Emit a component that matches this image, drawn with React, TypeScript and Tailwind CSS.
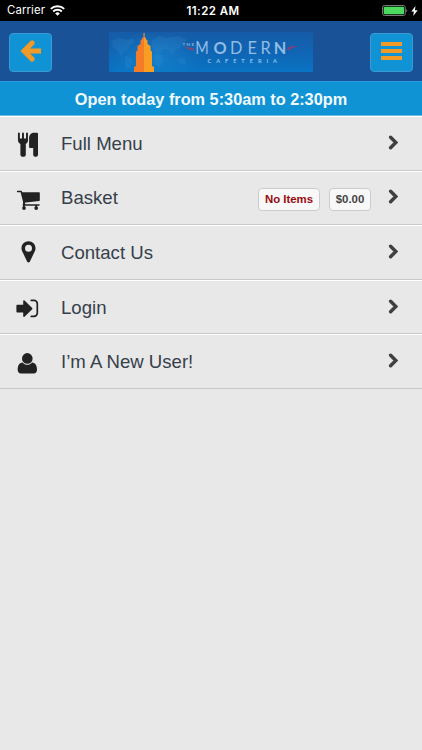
import type { ReactNode } from 'react';
import clsx from 'clsx';

type MenuItem = {
  label: string;
  icon: ReactNode;
  badges?: { text: string; className: string }[];
};

const items: MenuItem[] = [
  {
    label: 'Full Menu',
    icon: (
      <g>
        <path d="M4.900 3.500v6M9 3.500v6M13 3.500v6" stroke="currentColor" strokeWidth="1.900" strokeLinecap="round" />
        <path d="M4 8.500h10v1.800c0 1.800-.9 3-2.200 3.600v10.800a2 2 0 0 1-2 2H8.400a2 2 0 0 1-2-2V13.900C4.900 13.300 4 12.100 4 10.300z" />
        <path d="M20.500 2.700H23a1 1 0 0 1 1 1v21a2 2 0 0 1-2 2h-.800a2 2 0 0 1-2-2V18H16a.9.9 0 0 1-.9-.9V8.300c0-3.600 2-5.600 5.400-5.600z" />
      </g>
    ),
  },
  {
    label: 'Basket',
    icon: (
      <g>
        <path d="M3.600 6.500h3.600l3.400 13.200M9.300 20.100H25" fill="none" stroke="currentColor" strokeWidth="1.500" strokeLinecap="round" strokeLinejoin="round" />
        <path d="M7.400 7.200h17.700c.4 0 .7.300.7.700v7.300c0 .4-.3.700-.7.800L10 17.700z" />
        <circle cx="10" cy="23.100" r="1.900" />
        <circle cx="22.200" cy="23.100" r="1.900" />
        <path d="M9 17h1.800v6H9zM21.400 20h1.600v3h-1.600z" />
      </g>
    ),
    badges: [
      { text: 'No Items', className: 'w-[62px] text-[#990a10]' },
      { text: '$0.00', className: 'w-[42px] text-[#444]' },
    ],
  },
  {
    label: 'Contact Us',
    icon: (
      <path
        fillRule="evenodd"
        d="M14.500 2.300c-4 0-7 3.100-7 6.900 0 1.300.3 2.100.8 3.200l4.900 10.300c.5 1.100 2.100 1.100 2.600 0l4.900-10.300c.5-1.100.8-1.900.8-3.200 0-3.800-3-6.900-7-6.900zm0 3.500a3.500 3.500 0 1 1 0 7 3.500 3.500 0 0 1 0-7z"
      />
    ),
  },
  {
    label: 'Login',
    icon: (
      <g transform="translate(0 -.8)">
        <path d="M3.200 11.600h6V7.900c0-.7.800-1 1.300-.5l7.700 7.500c.3.300.3.800 0 1.100l-7.700 7.500c-.5.500-1.300.2-1.300-.5v-3.700h-6c-.5 0-.8-.3-.8-.8v-6.100c0-.5.3-.8.8-.8z" />
        <path d="M17.300 7.200H20a3.300 3.300 0 0 1 3.300 3.300v9.400a3.300 3.300 0 0 1-3.300 3.300h-2.700" fill="none" stroke="currentColor" strokeWidth="1.700" strokeLinecap="round" />
      </g>
    ),
  },
  {
    label: 'I’m A New User!',
    icon: (
      <g>
        <circle cx="13.300" cy="9.400" r="5.300" />
        <path d="M8.600 13.400c1.200 1.500 2.800 2.300 4.700 2.300s3.500-.8 4.700-2.300c3.500.2 5 3.200 5 7.300 0 2.300-1.300 3.700-3.300 3.700H7c-2 0-3.300-1.400-3.300-3.700 0-4.100 1.400-7.100 4.900-7.300z" />
      </g>
    ),
  },
];

function StatusBar() {
  return (
    <div className="grid h-[21px] grid-cols-[1fr_auto_1fr] items-center bg-black pr-[4px] pl-[7px] text-[11.6px] text-white">
      <div className="flex items-center gap-[5px]">
        <span className="pt-px font-['Inter','Liberation_Sans',sans-serif] text-[11.4px] tracking-[0.1px]">Carrier</span>
        <svg width="15" height="11" viewBox="0 0 15 11" fill="none" stroke="currentColor" strokeWidth="2">
          <path d="M.8 3.900a9.500 9.500 0 0 1 13.400 0M3.200 6.500a6.100 6.100 0 0 1 8.600 0" />
          <path d="M7.500 10.800 5.200 8.500a3.200 3.200 0 0 1 4.600 0z" fill="currentColor" stroke="none" />
        </svg>
      </div>
      <span className="pt-[2px] pl-px font-['Inter','Liberation_Sans',sans-serif] text-[11.5px] font-semibold tracking-[0.45px]">11:22 AM</span>
      <div className="flex items-center justify-end gap-[3px]">
        <svg width="26" height="11" viewBox="0 0 26 11">
          <rect x=".5" y=".5" width="22.800" height="10" rx="2" fill="none" stroke="#777" />
          <rect x="1.700" y="1.700" width="20.400" height="7.600" rx="1" fill="#4cd95f" />
          <path d="M24.300 3.700c1.200.5 1.200 3.100 0 3.600z" fill="#777" />
        </svg>
        <svg width="7" height="10" viewBox="0 0 7 10" fill="currentColor">
          <path d="M4.500 0 .3 5.600h2.600L2.200 10l4.500-5.800H3.900z" />
        </svg>
      </div>
    </div>
  );
}

function Logo() {
  return (
    <svg width="204" height="40" viewBox="0 0 204 40">
      <defs>
        <linearGradient id="sky" x1="0" y1="0" x2="0" y2="1">
          <stop offset="0" stopColor="#165ba7" />
          <stop offset=".5" stopColor="#1065b4" />
          <stop offset="1" stopColor="#0874c3" />
        </linearGradient>
        <radialGradient id="glow">
          <stop offset="0" stopColor="#1a8ad2" stopOpacity=".6" />
          <stop offset="1" stopColor="#1a8ad2" stopOpacity="0" />
        </radialGradient>
      </defs>
      <rect width="204" height="40" fill="url(#sky)" />
      <ellipse cx="45" cy="26" rx="48" ry="26" fill="url(#glow)" />
      <g fill="#43a0da" opacity=".15">
        <path d="m2 9 8-3 9 2 4-2 3 4-5 3-2 5-4 1-3 5-3-5-5-3zM16 24l6 2 2 4-5 8-3-6z" />
        <path d="m43 8 7-4 7 2 13-2 8 4-4 3-3 5-5 2-3 5-4-5-5-1-3 5-5-2-3-6zM45 22l7 1 3 5-4 7-4-2zM68 27l7-1 3 5-6 2z" />
      </g>
      <path d="M34.400 1v4L33 6.500l-.500 1.500-1 .5V12l-3 2v4l-1.500 2v14l-2 1v5h10V1z" fill="#f47b28" />
      <path d="M35 1h.600v4L37 6.500l.5 1.500 1 .5V12l3 2v4l1.500 2v14l2 1v5H35z" fill="#fa9d23" />
      <g fontFamily="Lato, sans-serif">
        <text x="73.500" y="13.500" fontSize="4.500" fontWeight="700" fill="#8db0de" textLength="11.500">THE</text>
        <path d="m76 14.500 9 2-1 2.200-6-2.200z" fill="#88466f" />
        <g fontSize="16.300" fill="#90bde6">
          <text x="86.200" y="21.800" textLength="13.500" lengthAdjust="spacingAndGlyphs">M</text>
          <text x="104.400" y="21.800" fontWeight="700">O</text>
          <text x="121" y="21.800">D</text>
          <text x="138.500" y="21.800">E</text>
          <text x="151.500" y="21.800">R</text>
          <text x="164.700" y="21.800" fontWeight="700">N</text>
        </g>
        <text x="98.500" y="30.900" fontSize="5.600" fontWeight="700" fill="#91c4eb" textLength="69.500">CAFETERIA</text>
      </g>
      <path d="m177.500 17 3.500-2.500 9-.500-7 1.800-3 2.200z" fill="#98386d" />
    </svg>
  );
}

function HeaderButton({ children }: { children: ReactNode }) {
  return (
    <button
      type="button"
      className="flex h-[39px] w-[43px] items-center justify-center rounded-[4px] border border-[#3c99d4] bg-[#1093d5]"
    >
      {children}
    </button>
  );
}

function Header() {
  return (
    <header className="flex h-[60px] items-center justify-between bg-[#1a5298] pt-[2px] pr-[9px] pl-[9px]">
      <HeaderButton>
        <svg className="mb-[2px]" width="22" height="24" viewBox="0 0 22 24" fill="none" stroke="#f29a27" strokeWidth="5">
          <path d="M12.200 3.900 4 12l8.200 8.100" strokeLinecap="round" strokeLinejoin="miter" />
          <path d="M5 12h16" strokeWidth="5" />
        </svg>
      </HeaderButton>
      <Logo />
      <HeaderButton>
        <span className="mb-[2px] flex flex-col gap-[3px]">
          <span className="h-[4px] w-[21px] bg-[#f29a27]" />
          <span className="h-[4px] w-[21px] bg-[#f29a27]" />
          <span className="h-[4px] w-[21px] bg-[#f29a27]" />
        </span>
      </HeaderButton>
    </header>
  );
}

function MenuRow({ label, icon, badges = [] }: MenuItem) {
  return (
    <li className="flex h-[54.6px] items-center border-t border-b border-t-white border-b-[#c8c8c8] pr-[24px] pl-[14px]">
      <svg className="mt-[2px] shrink-0 text-[#222]" width="28" height="28" viewBox="0 0 28 28" fill="currentColor">
        {icon}
      </svg>
      <span className="ml-[19px] flex-1 pt-px text-[18.6px] text-[#36404a]">{label}</span>
      {badges.map((badge) => (
        <span
          key={badge.text}
          className={clsx(
            'mt-[3px] mr-[9px] flex h-[23px] items-center justify-center rounded-[4px] border border-[#ccc] bg-[#f8f8f8] text-[11.4px] font-bold',
            badge.className,
          )}
        >
          {badge.text}
        </span>
      ))}
      <svg className="ml-[8px] mb-[2px]" width="10" height="15" viewBox="0 0 10 15" fill="none" stroke="#404040" strokeWidth="3.400">
        <path d="m2.600 2.200 5.200 5.300-5.200 5.300" strokeLinecap="round" />
      </svg>
    </li>
  );
}

export default function App() {
  return (
    <div className="flex h-[750px] w-[422px] flex-col bg-[#e8e8e8] font-['Liberation_Sans',Arial,sans-serif]">
      <StatusBar />
      <Header />
      <div className="flex h-[35px] shrink-0 items-center justify-center border-t border-b border-t-[#2a9bdc] border-b-[#70b9e2] bg-[#1093d5] pt-[2px] text-[16.3px] font-bold text-[#f1faff]">
        Open today from 5:30am to 2:30pm
      </div>
      <ul>
        {items.map((item) => (
          <MenuRow key={item.label} {...item} />
        ))}
      </ul>
    </div>
  );
}
